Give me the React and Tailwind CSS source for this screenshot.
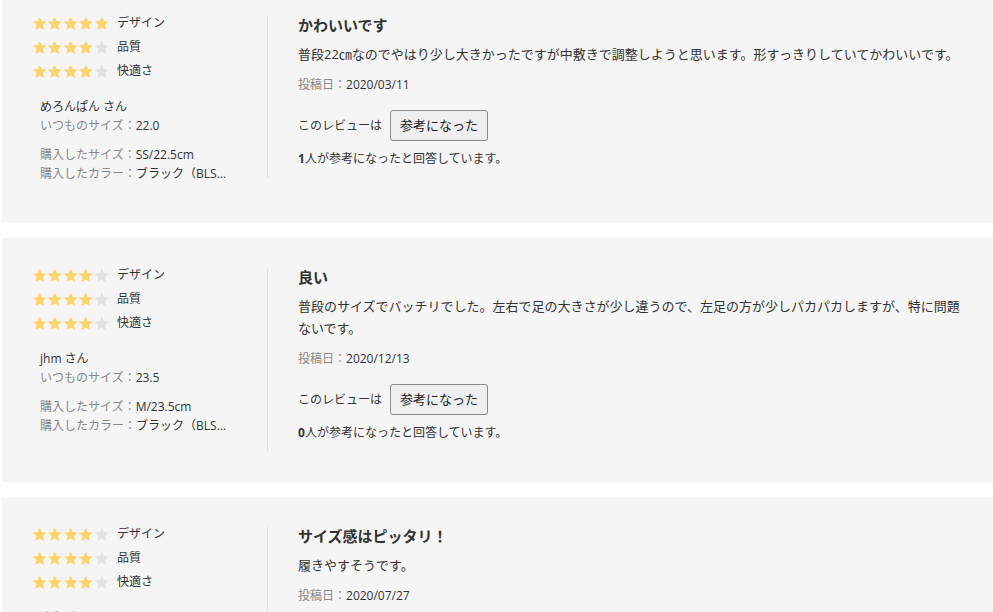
import React from 'react';

const reviews = [
  {
    ratings: [5, 4, 4],
    name: 'めろんぱん さん',
    usual: '22.0',
    size: 'SS/22.5cm',
    color: 'ブラック（BLSK-22）',
    title: 'かわいいです',
    body: '普段22㎝なのでやはり少し大きかったですが中敷きで調整しようと思います。形すっきりしていてかわいいです。',
    date: '2020/03/11',
    helpful: 1,
  },
  {
    ratings: [4, 4, 4],
    name: 'jhm さん',
    usual: '23.5',
    size: 'M/23.5cm',
    color: 'ブラック（BLSK-23）',
    title: '良い',
    body: '普段のサイズでバッチリでした。左右で足の大きさが少し違うので、左足の方が少しパカパカしますが、特に問題ないです。',
    date: '2020/12/13',
    helpful: 0,
  },
  {
    ratings: [4, 4, 4],
    name: 'ゆう さん',
    usual: '23.0',
    size: 'S/23.0cm',
    color: 'ブラック（BLSK-23）',
    title: 'サイズ感はピッタリ！',
    body: '履きやすそうです。',
    date: '2020/07/27',
    helpful: 0,
  },
];

const labels = ['デザイン', '品質', '快適さ'];

const Star = ({ on }) => (
  <svg viewBox="0 0 24 24" className="w-[15.4px] h-[15px]">
    <polygon
      points="12,1 15.3,8.1 23,9.1 17.3,14.4 18.8,22.2 12,18.3 5.2,22.2 6.7,14.4 1,9.1 8.7,8.1"
      fill={on ? '#fdd36b' : '#e2e2e2'}
    />
  </svg>
);

const Stars = ({ value }) => (
  <div className="flex">
    {[0, 1, 2, 3, 4].map((i) => <Star key={i} on={i < value} />)}
  </div>
);

const ReviewCard = ({ r, first }) => (
  <div className={`bg-[#f5f5f5] ml-[2px] px-[30px] py-[30px] flex items-start ${first ? 'mt-[-14px]' : 'mt-[15px]'}`}>
    {/* left: ratings + reviewer */}
    <div className="w-[235px] shrink-0 pr-[35px] pb-[10px] text-[12px] text-[#333]">
      <div className="flex flex-col gap-[8px] mt-[-1px]">
        {r.ratings.map((v, i) => (
          <div key={i} className="flex items-center h-[16px] gap-[8px]">
            <Stars value={v} />
            <span className="leading-[16px]">{labels[i]}</span>
          </div>
        ))}
      </div>
      <div className="mt-[18px] pl-[8px] leading-[19px]">
        <p>{r.name}</p>
        <p className="whitespace-nowrap"><span className="text-[#888]">いつものサイズ：</span>{r.usual}</p>
        <div className="mt-[10px]">
          <p className="truncate"><span className="text-[#888]">購入したサイズ：</span>{r.size}</p>
          <p className="truncate"><span className="text-[#888]">購入したカラー：</span>{r.color}</p>
        </div>
      </div>
    </div>

    {/* right: review body */}
    <div className="flex-1 min-w-0 border-l border-[#e0e0e0] pl-[30px] pb-[10px] text-[#333]">
      <h3 className="text-[15px] font-bold leading-[18px]">{r.title}</h3>
      <p className="mt-[9px] text-[13px] leading-[22px]">{r.body}</p>
      <p className="mt-[10px] text-[12px] leading-[19px]">
        <span className="text-[#888]">投稿日：</span>{r.date}
      </p>
      <div className="mt-[16px] flex items-center text-[12px]">
        <span>このレビューは</span>
        <button className="ml-[8px] h-[31px] px-[9px] text-[13px] text-[#222] bg-[#efefef] border border-[#8a8a8a] rounded-[3px]">
          参考になった
        </button>
      </div>
      <p className="mt-[8px] text-[12px] leading-[19px]">
        <span className="font-bold">{r.helpful}</span>人が参考になったと回答しています。
      </p>
    </div>
  </div>
);

export default function App() {
  return (
    <div
      className="bg-white w-[993px] h-[612px] overflow-hidden"
      style={{ fontFamily: '"Open Sans", "Noto Sans CJK JP", sans-serif' }}
    >
      {reviews.map((r, i) => (
        <ReviewCard key={i} r={r} first={i === 0} />
      ))}
    </div>
  );
}
